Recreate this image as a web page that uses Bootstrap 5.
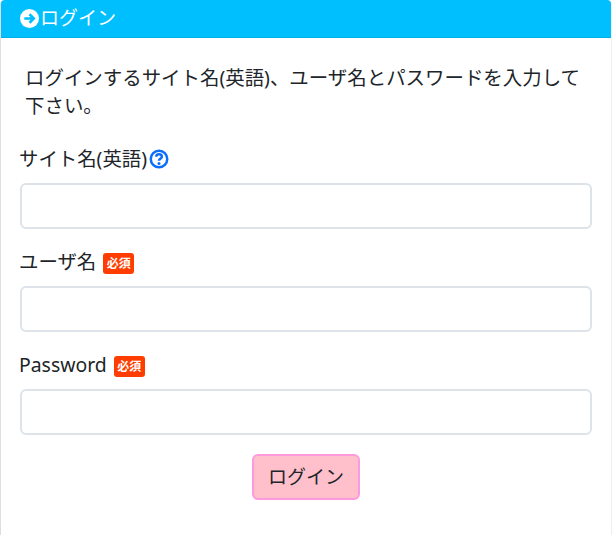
<!DOCTYPE html>
<html lang="ja"><head><meta charset="utf-8">
<link href="https://cdn.jsdelivr.net/npm/bootstrap@5.3.0/dist/css/bootstrap.min.css" rel="stylesheet">
<style>
html,body{height:100%;overflow:hidden}
body{font-family:"Noto Sans","Noto Sans CJK JP",sans-serif;color:#212529;background:#fff}
.login-card{height:100%;border-radius:4px 4px 0 0;border-color:#dedede;border-width:0 0 0 1px;border-right:1px solid #eee}
.login-head{background:#00bfff;color:#fff;height:38px;font-size:19px;padding:0 19px;border:0;border-bottom:1px solid #00aee8;border-radius:4px 4px 0 0!important;gap:1px}
.login-intro{font-size:19.45px;line-height:28px;margin:0 0 25px;padding:0 5px 0 5px}
.login-body{padding:26px 19px 0}
.login-label{font-size:19.4px;line-height:28px;margin-bottom:10px;display:flex;align-items:center;margin-left:-1px}
.help-mark{margin-left:2px}
.login-input{height:46px;border:2px solid #dde3e9;margin-bottom:19px}
.req-tag{background:#ff3d00;color:#fff;font-size:12px;font-weight:700;border-radius:3px;padding:0 3.5px;height:21px;line-height:21px;margin-left:7px;margin-top:2px}
.login-btn{background:#ffc0cb;border:2px solid #ff99dd;color:#212529;font-size:19px;height:46px;width:108px;padding:0}
</style></head><body>
<div class="card login-card">
<div class="card-header login-head d-flex align-items-center">
<svg width="19" height="19" viewBox="0 0 16 16"><circle cx="8" cy="8" r="8" fill="#fff"/><path d="M3.6 8h7.8M8 4.4 11.6 8 8 11.6" stroke="#00bfff" stroke-width="2.2" fill="none"/></svg>
<span>ログイン</span></div>
<div class="card-body login-body">
<p class="login-intro">ログインするサイト名(英語)、ユーザ名とパスワードを入力して下さい。</p>
<form>
<label class="login-label">サイト名(英語)<svg class="help-mark" width="20" height="20" viewBox="0 0 16 16"><circle cx="8" cy="8" r="6.6" fill="none" stroke="#0d6efd" stroke-width="2"/><path d="M5.8 6.2C5.8 3.6 10.3 3.6 10.3 6.2 10.3 7.8 8 7.6 8 9.4" fill="none" stroke="#0d6efd" stroke-width="2"/><circle cx="8" cy="11.6" r="1.2" fill="#0d6efd"/></svg></label>
<input class="form-control login-input" type="text">
<label class="login-label">ユーザ名<span class="req-tag">必須</span></label>
<input class="form-control login-input" type="text">
<label class="login-label">Password<span class="req-tag">必須</span></label>
<input class="form-control login-input" type="password">
<div class="text-center"><button type="button" class="btn login-btn">ログイン</button></div>
</form>
</div></div>
<script src="https://cdn.jsdelivr.net/npm/bootstrap@5.3.0/dist/js/bootstrap.bundle.min.js"></script>
</body></html>
